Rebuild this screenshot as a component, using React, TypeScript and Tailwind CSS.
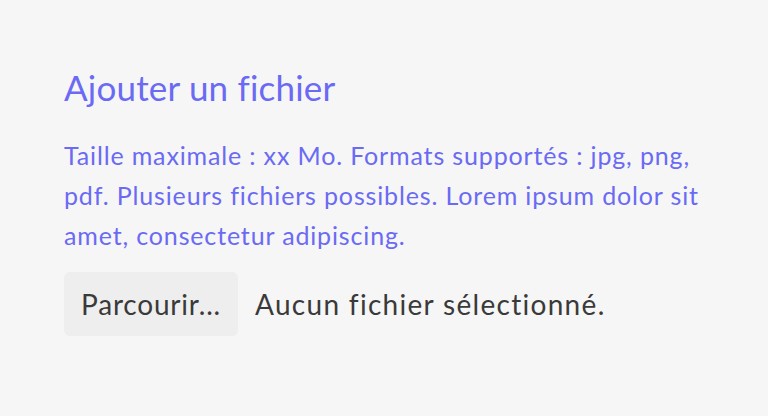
import React from 'react';

const App: React.FC = () => {
  return (
    <div
      className="w-[768px] h-[416px] bg-[#f6f6f6] px-16 pt-[67px] [font-variant-ligatures:none]"
      style={{ fontFamily: 'Lato, "Noto Sans", sans-serif' }}
    >
      <label className="block text-[35px] leading-[40px] tracking-[0.2px] text-[#6a6af4]">Ajouter un fichier</label>
      <p className="mt-[28px] text-[25px] leading-[40px] tracking-[0.85px] text-[#6a6af4]">
        Taille maximale : xx Mo. Formats supportés : jpg, png,
        <br />
        pdf. Plusieurs fichiers possibles. Lorem ipsum dolor sit
        <br />
        amet, consectetur adipiscing.
      </p>
      <div className="mt-[17px] flex items-center gap-[17px] text-[28px] text-[#3a3a3a]">
        <button className="h-16 w-[174px] rounded-md bg-[#eeeeee] tracking-[0.8px]">Parcourir...</button>
        <span className="tracking-[1.3px]">Aucun fichier sélectionné.</span>
      </div>
    </div>
  );
};

export default App;
